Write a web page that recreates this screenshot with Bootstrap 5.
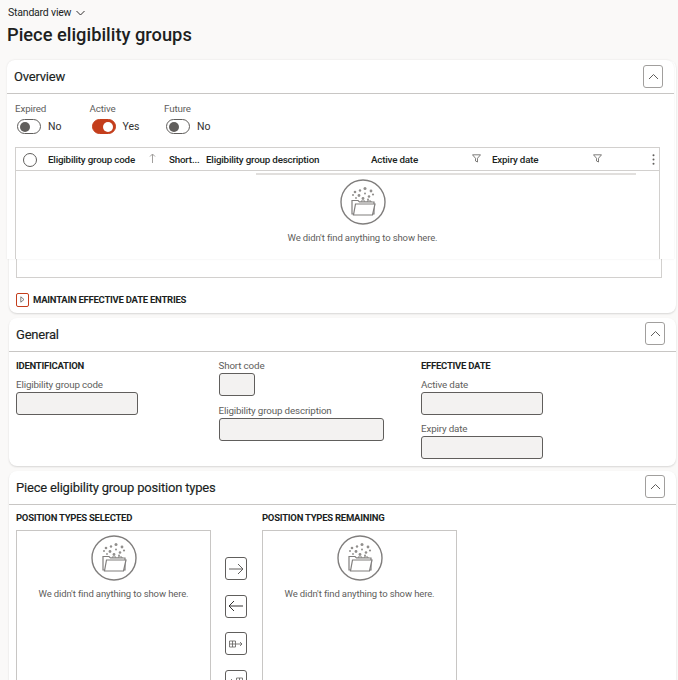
<!DOCTYPE html>
<html lang="en">
<head>
<meta charset="utf-8">
<title>Piece eligibility groups</title>
<link rel="stylesheet" href="https://cdn.jsdelivr.net/npm/bootstrap@5.3.0/dist/css/bootstrap.min.css">
<style>
html,body{height:680px;overflow:hidden}
body{background:#faf9f8;color:#201f1e;font-family:Roboto,"Open Sans",sans-serif;font-size:11px;line-height:14px}
.topview{height:26px;padding:0 0 0 8px;font-size:10.5px;letter-spacing:-.2px}
.topview svg{margin-left:5px}
.pagetitle{margin:0 0 0 7px;height:34px;font-size:18.3px;line-height:18px;font-weight:500}
.pane{margin:0 2px 5px 9px;box-shadow:0 1px 2px rgba(0,0,0,.14);border-radius:8px;background:#fff}
.panetop{position:relative;left:-2px;background:#fff;border-radius:8px 8px 0 0;height:199px;box-shadow:0 0 2px rgba(0,0,0,.1)}
.panehead{border-bottom:1px solid #c8c6c4;height:34px;padding:0 11px 0 7px}
.panetitle{font-size:13px;line-height:18px;font-weight:400;letter-spacing:-.2px;margin:1px 0 0;-webkit-text-stroke:.15px #201f1e}
.collapsebtn{width:20px;height:23px;padding:0;background:#fff;border:1px solid #a19f9d;border-radius:3px;margin-bottom:3px}
.headone .collapsebtn{margin-bottom:1px}
.togglerow{padding:8px 0 0 8px;height:53px}
.toggleitem{width:74.5px}
.tracklabel{font-size:9.8px;letter-spacing:-.15px;line-height:14px;color:#605e5c;margin-bottom:3px}
.track{width:24px;height:15px;border:1px solid #605e5c;border-radius:8px;margin:0 7px 0 2px;padding:2px;background:#fff}
.track i{display:block;width:10px;height:10px;border-radius:50%;background:#605e5c}
.track.on{background:#c43e1c;border-color:#c43e1c;justify-content:flex-end}
.track.on i{background:#fff}
.statetext{font-size:10.5px;color:#323130}
.gridtop{margin:0 0 0 8px;width:645px;height:112px;border:1px solid #d2d0ce;border-bottom:0}
.gridhead{height:23px;border-bottom:1px solid #d2d0ce;font-size:9.8px;letter-spacing:-.2px;font-weight:500;color:#201f1e;white-space:nowrap;padding-top:1px}
.gridhead>span{flex:none}
.radiomark{width:14px;height:14px;border:1px solid #605e5c;border-radius:50%;margin:0 11px 0 7px}
.c1{width:101px}.c2{width:20px}.c3{width:37px}.c4{width:165px}.c5{width:100.5px}.c6{width:20.5px}.c8{width:42px}
.funnel{display:block;margin-top:-3px}
.sortup{display:block;margin-top:-3px}
.gridrule{height:2px;background:#e1dfdd;margin:2px 0 0 240px;width:380px}
.emptybox{text-align:center;color:#605e5c;font-size:9.5px;letter-spacing:-.12px;line-height:13px}
.emptybox svg{display:block;margin:0 auto 6px}
.gridempty{padding:4px 0 0 50px}
.gridbottom{margin-left:7px;width:646px;height:19px;border:1px solid #d2d0ce;border-top:0}
.panelow{height:54px}
.expander{margin:14px 0 0 7px;padding-top:1px;font-size:9.5px;letter-spacing:-.25px;font-weight:700;color:#201f1e;white-space:nowrap}
.expandbox{width:13px;height:14px;border:1px solid #c43e1c;border-radius:2px;margin:-1px 4px 0 0}
.formgrid{padding:7px 7px 0;height:114px}
.formcolumn{width:202.5px}
.grouphead{font-size:9.5px;letter-spacing:-.25px;line-height:14px;font-weight:700;margin:0 0 5px;color:#201f1e}
.fieldlabel{display:block;font-size:9.8px;letter-spacing:-.15px;line-height:14px;color:#605e5c;margin:0}
.ro{display:block;height:23px;background:#f3f2f1;border:1px solid #605e5c;border-radius:3px;margin-bottom:7px}
.w122{width:122px}.w36{width:36px;margin-bottom:8px}.w165{width:165px}
.lists{padding:6px 7px 0}
.listcol{width:195px}
.listbox{width:195px;height:200px;border:1px solid #c8c6c4;padding-top:4px}
.listbox svg{margin-bottom:6px}
.movecol{width:51px;padding:46px 0 0 14px}
.movebtn{width:22px;height:23px;background:#fff;border:1px solid #605e5c;border-radius:3px;padding:0;margin-bottom:14.5px;display:flex;align-items:center;justify-content:center}
.listhead{font-size:9.5px;letter-spacing:-.25px;line-height:14px;font-weight:700;margin:0 0 5px;white-space:nowrap}
</style>
</head>
<body>
<div class="topview d-flex align-items-center">Standard view
  <svg width="9" height="6" viewBox="0 0 9 6"><path d="M.5 1 4.500 5 8.500 1" fill="none" stroke="#323130"/></svg>
</div>
<h1 class="pagetitle">Piece eligibility groups</h1>

<section class="pane">
  <div class="panetop">
    <div class="panehead headone d-flex align-items-center justify-content-between">
      <h2 class="panetitle">Overview</h2>
      <button class="collapsebtn d-flex align-items-center justify-content-center" type="button" aria-label="Collapse"><svg width="11" height="7" viewBox="0 0 11 7"><path d="M1 6 5.500 1.500 10 6" fill="none" stroke="#605e5c"/></svg></button>
    </div>
    <div class="togglerow d-flex">
      <div class="toggleitem"><div class="tracklabel">Expired</div><div class="d-flex align-items-center"><span class="track d-flex align-items-center"><i></i></span><span class="statetext">No</span></div></div>
      <div class="toggleitem"><div class="tracklabel">Active</div><div class="d-flex align-items-center"><span class="track on d-flex align-items-center"><i></i></span><span class="statetext">Yes</span></div></div>
      <div class="toggleitem"><div class="tracklabel">Future</div><div class="d-flex align-items-center"><span class="track d-flex align-items-center"><i></i></span><span class="statetext">No</span></div></div>
    </div>
    <div class="gridtop">
      <div class="gridhead d-flex align-items-center">
        <span class="radiomark"></span>
        <span class="c1">Eligibility group code</span>
        <span class="c2"><svg class="sortup" width="7" height="10" viewBox="0 0 7 10"><path d="M3.500 10V1M1 3.500 3.500 1 6 3.500" fill="none" stroke="#a19f9d"/></svg></span>
        <span class="c3">Short...</span>
        <span class="c4">Eligibility group description</span>
        <span class="c5">Active date</span>
        <span class="c6"><svg class="funnel" width="9" height="9" viewBox="0 0 9 9"><path d="M.5.8h8L5.500 4.300V8L3.500 7V4.300Z" fill="none" stroke="#605e5c" stroke-width=".8"/></svg></span>
        <span class="c5">Expiry date</span>
        <span class="c6"><svg class="funnel" width="9" height="9" viewBox="0 0 9 9"><path d="M.5.8h8L5.500 4.300V8L3.500 7V4.300Z" fill="none" stroke="#605e5c" stroke-width=".8"/></svg></span>
        <span class="c8 text-end"><svg width="3" height="11" viewBox="0 0 3 11"><g fill="#605e5c"><circle cx="1.500" cy="1.200" r="1"/><circle cx="1.500" cy="5.500" r="1"/><circle cx="1.500" cy="9.800" r="1"/></g></svg></span>
      </div>
      <div class="gridrule"></div>
      <div class="emptybox gridempty">
        <svg width="46" height="46" viewBox="0 0 46 46"><use href="#nofiles"/></svg>
        We didn't find anything to show here.
      </div>
    </div>
  </div>
  <div class="panelow">
    <div class="gridbottom"></div>
    <div class="expander d-flex align-items-center">
      <span class="expandbox d-flex align-items-center justify-content-center"><svg width="5" height="7" viewBox="0 0 5 7"><path d="M.8.8 4 3.500.8 6.200Z" fill="none" stroke="#605e5c" stroke-width=".8"/></svg></span>
      MAINTAIN EFFECTIVE DATE ENTRIES
    </div>
  </div>
</section>

<section class="pane">
  <div class="panehead d-flex align-items-center justify-content-between">
    <h2 class="panetitle">General</h2>
    <button class="collapsebtn d-flex align-items-center justify-content-center" type="button" aria-label="Collapse"><svg width="11" height="7" viewBox="0 0 11 7"><path d="M1 6 5.500 1.500 10 6" fill="none" stroke="#605e5c"/></svg></button>
  </div>
  <div class="formgrid d-flex">
    <div class="formcolumn">
      <h3 class="grouphead">IDENTIFICATION</h3>
      <label class="fieldlabel">Eligibility group code</label>
      <span class="ro w122"></span>
    </div>
    <div class="formcolumn">
      <label class="fieldlabel">Short code</label>
      <span class="ro w36"></span>
      <label class="fieldlabel">Eligibility group description</label>
      <span class="ro w165"></span>
    </div>
    <div class="formcolumn">
      <h3 class="grouphead">EFFECTIVE DATE</h3>
      <label class="fieldlabel">Active date</label>
      <span class="ro w122"></span>
      <label class="fieldlabel">Expiry date</label>
      <span class="ro w122"></span>
    </div>
  </div>
</section>

<section class="pane">
  <div class="panehead d-flex align-items-center justify-content-between">
    <h2 class="panetitle">Piece eligibility group position types</h2>
    <button class="collapsebtn d-flex align-items-center justify-content-center" type="button" aria-label="Collapse"><svg width="11" height="7" viewBox="0 0 11 7"><path d="M1 6 5.500 1.500 10 6" fill="none" stroke="#605e5c"/></svg></button>
  </div>
  <div class="lists d-flex">
    <div class="listcol">
      <h3 class="listhead">POSITION TYPES SELECTED</h3>
      <div class="listbox emptybox"><svg width="46" height="46" viewBox="0 0 46 46"><use href="#nofiles"/></svg>We didn't find anything to show here.</div>
    </div>
    <div class="movecol">
      <button class="movebtn" type="button" aria-label="Add"><svg width="16" height="12" viewBox="0 0 16 12"><path d="M1 6H15M10 1l5 5-5 5" fill="none" stroke="#605e5c"/></svg></button>
      <button class="movebtn" type="button" aria-label="Remove"><svg width="16" height="12" viewBox="0 0 16 12"><path d="M15 6H1M6 1 1 6l5 5" fill="none" stroke="#323130"/></svg></button>
      <button class="movebtn" type="button" aria-label="Add all"><svg width="14" height="8" viewBox="0 0 14 8"><path d="M.5 1h6v6h-6zM.5 4h6M3.500 1v6M7 4h6M11 2l2 2-2 2" fill="none" stroke="#605e5c" stroke-width=".8"/></svg></button>
      <button class="movebtn" type="button" aria-label="Remove all"><svg width="14" height="8" viewBox="0 0 14 8"><path d="M7.500 1h6v6h-6zM7.500 4h6M10.500 1v6M7 4H1M3 2 1 4l2 2" fill="none" stroke="#605e5c" stroke-width=".8"/></svg></button>
    </div>
    <div class="listcol">
      <h3 class="listhead">POSITION TYPES REMAINING</h3>
      <div class="listbox emptybox"><svg width="46" height="46" viewBox="0 0 46 46"><use href="#nofiles"/></svg>We didn't find anything to show here.</div>
    </div>
  </div>
</section>

<svg width="0" height="0" class="d-block" aria-hidden="true"><defs>
  <g id="nofiles">
    <circle cx="23" cy="23" r="22" fill="#fff" stroke="#807e7d" stroke-width="1.4"/>
    <g fill="#918f8d">
      <circle cx="15" cy="13" r="1.300"/><circle cx="20" cy="11.500" r="1.200"/><circle cx="25" cy="9.500" r="1.500"/><circle cx="31" cy="12" r="1.400"/>
      <circle cx="19" cy="16.500" r="1.400"/><circle cx="25" cy="14.500" r="1"/><circle cx="29" cy="17.500" r="1.300"/><circle cx="33" cy="15.500" r="1.100"/>
      <circle cx="13" cy="16" r="1"/><circle cx="23" cy="19.500" r="1.400"/><circle cx="28" cy="20.500" r="1"/><circle cx="16" cy="19" r=".9"/>
    </g>
    <path d="M12 35V21.500h6l1.500 1.500h14.500V35H12Z" fill="#fff" stroke="#807e7d" stroke-width="1.2"/>
    <path d="M13.500 36H32.500L35 25H15.500Z" fill="#fff" stroke="#807e7d" stroke-width="1.2"/>
    <path d="M21 23v-1h4v1M27 23v-1h4v1" fill="none" stroke="#807e7d"/>
  </g>
</defs></svg>

<script src="https://cdn.jsdelivr.net/npm/bootstrap@5.3.0/dist/js/bootstrap.bundle.min.js"></script>
</body>
</html>
